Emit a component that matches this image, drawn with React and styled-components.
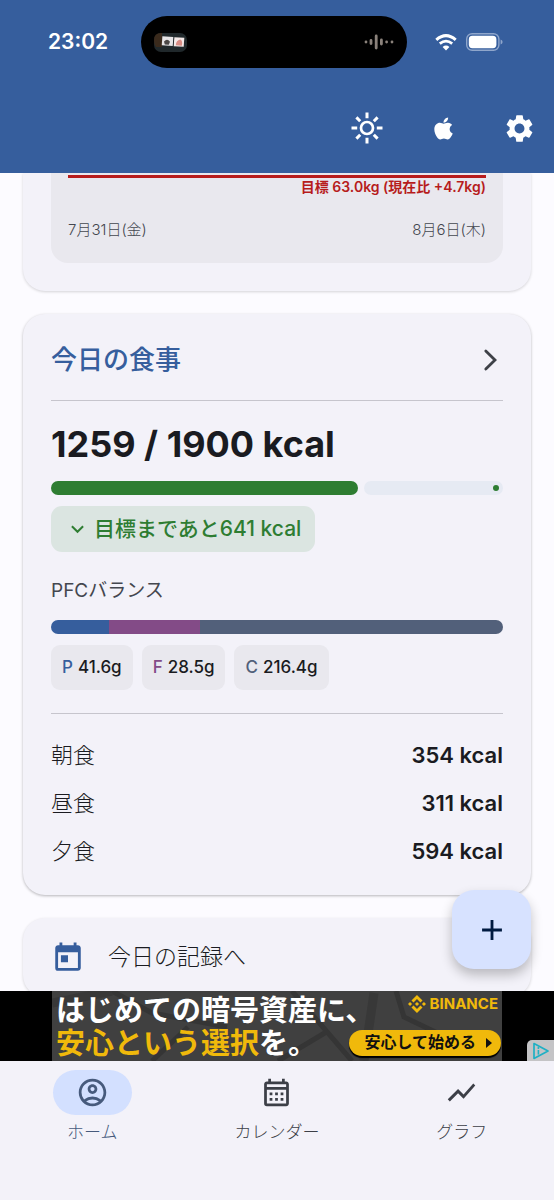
import styled, { createGlobalStyle } from "styled-components";
import { FaApple } from "react-icons/fa";
import {
  MdAdd,
  MdOutlineAccountCircle,
  MdOutlineCalendarMonth,
  MdSettings,
  MdShowChart,
  MdToday,
} from "react-icons/md";
import { SiBinance } from "react-icons/si";

const GlobalStyle = createGlobalStyle`
  :root {
    --color-primary: #365e9d;
    --color-surface: #f3f2f9;
    --color-panel: #e9e8ee;
    --color-background: #fcfbff;
    --color-text: #1a1b21;
    --color-muted: #44474f;
    --color-green: #2e7d32;
    --color-purple: #834b87;
    --color-slate: #52607a;
    --color-red: #b71c1c;
    --color-divider: #c6c5cd;
    --color-yellow: #f0b90b;
  }

  * {
    box-sizing: border-box;
  }

  body {
    margin: 0;
    background-color: var(--color-surface);
    color: var(--color-text);
    font-family: Inter, "Noto Sans CJK JP", sans-serif;
    line-height: 1.2;
  }

  button {
    font: inherit;
    border: none;
    padding: 0;
    background: none;
    cursor: pointer;
  }

  a {
    color: inherit;
    text-decoration: none;
  }

  h1, h2, p, dl, dd {
    margin: 0;
  }

  svg {
    display: block;
    flex-shrink: 0;
  }
`;

const Screen = styled.div`
  display: flex;
  flex-direction: column;
  height: 100vh;
`;

const Header = styled.header`
  background-color: var(--color-primary);
  color: #fff;
  padding: 16px 0 27px;
`;

const StatusBar = styled.div`
  display: grid;
  grid-template-columns: 1fr 266px 1fr;
  align-items: center;
  padding-right: 6px;
`;

const Clock = styled.time`
  padding-left: 48px;
  font-size: 21px;
  font-weight: 600;
`;

const Island = styled.div`
  display: flex;
  align-items: center;
  justify-content: space-between;
  height: 52px;
  padding: 0 13px;
  border-radius: 26px;
  background-color: #000;
`;

const StatusIcons = styled.div`
  display: flex;
  align-items: center;
  gap: 9px;
  padding-left: 28px;
`;

const Toolbar = styled.div`
  display: flex;
  justify-content: flex-end;
  gap: 40px;
  padding: 42px 17px 0;
`;

const IconButton = styled.button`
  display: grid;
  place-items: center;
  width: 36px;
  height: 36px;
  color: #fff;
`;

const Body = styled.div`
  position: relative;
  flex: 1;
  min-height: 0;
  background-color: var(--color-background);
`;

const Feed = styled.main`
  display: flex;
  flex-direction: column;
  gap: 23px;
  height: 100%;
  padding: 0 23px;
  overflow: hidden;
`;

const Card = styled.section`
  flex-shrink: 0;
  padding: 22px 28px 20px;
  border-radius: 22px;
  background-color: var(--color-surface);
  box-shadow: 0 1px 3px rgba(0, 0, 0, 0.28);
`;

const WeightCard = styled(Card)`
  padding: 0 28px 28px;
  border-radius: 0 0 22px 22px;
  box-shadow: 0 1px 3px rgba(0, 0, 0, 0.16);
`;

const ChartPanel = styled.div`
  padding: 2px 17px 22px;
  border-radius: 0 0 17px 17px;
  background-color: var(--color-panel);
`;

const GoalLine = styled.p`
  border-top: 3px solid var(--color-red);
  color: var(--color-red);
  font-size: 14px;
  font-weight: 600;
  line-height: 18px;
  text-align: right;
`;

const DateRange = styled.div`
  display: flex;
  justify-content: space-between;
  margin-top: 23px;
  color: var(--color-muted);
  font-size: 15px;
  font-weight: 300;
  line-height: 22px;
`;

const CardTitle = styled.h2`
  margin-bottom: 17px;
  font-size: 26px;
  font-weight: 500;
  line-height: 47px;
  color: var(--color-primary);

  a {
    display: flex;
    align-items: center;
    justify-content: space-between;
  }
`;

const Divider = styled.hr`
  height: 1px;
  margin: 0;
  border: none;
  background-color: var(--color-divider);
`;

const Total = styled.p`
  margin: 18px 0 12px;
  font-size: 36px;
  font-weight: 700;
  line-height: 50px;
`;

const Progress = styled.div`
  display: flex;
  gap: 6px;
  height: 14px;
`;

const ProgressValue = styled.div`
  border-radius: 7px;
  background-color: var(--color-green);
`;

const ProgressRest = styled.div`
  display: flex;
  flex: 1;
  align-items: center;
  justify-content: flex-end;
  padding-right: 4px;
  border-radius: 7px;
  background-color: #e6eaf3;

  &::after {
    content: "";
    width: 6px;
    height: 6px;
    border-radius: 50%;
    background-color: var(--color-green);
  }
`;

const Remaining = styled.p`
  display: flex;
  align-items: center;
  gap: 10px;
  width: fit-content;
  height: 46px;
  margin-top: 11px;
  padding: 0 14px 0 20px;
  border-radius: 11px;
  background-color: #dbe5e1;
  color: var(--color-green);
  font-size: 21px;
  font-weight: 500;
`;

const SubTitle = styled.p`
  margin: 26px 0 16px;
  color: var(--color-muted);
  font-size: 19px;
  font-weight: 400;
  line-height: 26px;
`;

const Balance = styled.div`
  display: flex;
  height: 14px;
  border-radius: 7px;
  overflow: hidden;
`;

const BalancePart = styled.div`
  background-color: ${(props) => props.$color};
`;

const Chips = styled.div`
  display: flex;
  gap: 9px;
  margin: 11px 0 23px;
`;

const Chip = styled.span`
  display: flex;
  align-items: center;
  gap: 5px;
  height: 45px;
  padding: 0 11px;
  border-radius: 9px;
  background-color: var(--color-panel);
  font-size: 17px;
  font-weight: 500;

  b {
    color: ${(props) => props.$color};
    font-weight: 500;
  }
`;

const Meals = styled.dl`
  margin-top: 17px;
`;

const Meal = styled.div`
  display: flex;
  align-items: center;
  justify-content: space-between;
  height: 48px;
  font-size: 22px;

  dt {
    font-weight: 300;
  }

  dd {
    font-weight: 600;
  }
`;

const RecordLink = styled.a`
  display: flex;
  flex-shrink: 0;
  align-items: center;
  gap: 23px;
  height: 79px;
  padding: 0 28px;
  border-radius: 22px;
  background-color: var(--color-surface);
  box-shadow: 0 1px 3px rgba(0, 0, 0, 0.16);
  font-size: 23px;
  font-weight: 300;

  svg {
    color: var(--color-primary);
  }
`;

const AddButton = styled.button`
  position: absolute;
  right: 23px;
  bottom: 22px;
  display: grid;
  place-items: center;
  width: 79px;
  height: 79px;
  border-radius: 22px;
  background-color: #d7e2ff;
  color: #001a40;
  box-shadow: 0 6px 12px rgba(0, 0, 0, 0.24);
`;

const AdStrip = styled.aside`
  position: relative;
  display: flex;
  justify-content: center;
  height: 70px;
  background-color: #000;
`;

const AdBanner = styled.a`
  position: relative;
  width: 450px;
  padding: 3px 4px 0;
  background-color: #404040;
  color: #fff;
`;

const AdPattern = styled.svg`
  position: absolute;
  inset: 0;
`;

const AdCopy = styled.p`
  position: relative;
  font-size: 29px;
  font-weight: 700;
  line-height: 33px;
  white-space: nowrap;

  em {
    color: var(--color-yellow);
    font-style: normal;
  }
`;

const AdSide = styled.div`
  position: absolute;
  top: 4px;
  right: 1px;
  display: flex;
  flex-direction: column;
  align-items: flex-end;
  gap: 17px;
`;

const AdBrand = styled.span`
  display: flex;
  align-items: center;
  gap: 4px;
  padding-right: 3px;
  color: var(--color-yellow);
  font-size: 15px;
  font-weight: 700;
  line-height: 18px;
`;

const AdAction = styled.span`
  display: flex;
  align-items: center;
  gap: 10px;
  height: 26px;
  padding: 0 9px 0 15px;
  border-radius: 13px;
  background-color: var(--color-yellow);
  box-shadow: 0 2px 1px #000;
  color: #111;
  font-size: 16px;
  font-weight: 700;
`;

const AdChoices = styled.a`
  position: absolute;
  right: 0;
  bottom: 0;
  display: grid;
  place-items: center;
  width: 27px;
  height: 21px;
  border-top-left-radius: 5px;
  background-color: #c4c4c6;
`;

const Nav = styled.nav`
  display: grid;
  grid-template-columns: repeat(3, 1fr);
  padding: 9px 0 55px;
  background-color: var(--color-surface);
`;

const NavItem = styled.a`
  display: flex;
  flex-direction: column;
  align-items: center;
  gap: 5px;
  color: ${(props) => (props.$active ? "#465a7c" : "#3c3f47")};
  font-size: 17px;
  font-weight: 300;
  line-height: 25px;
`;

const NavIcon = styled.span`
  display: grid;
  place-items: center;
  width: 79px;
  height: 45px;
  border-radius: 23px;
  background-color: ${(props) => (props.$active ? "#d3e0ff" : "transparent")};
`;

const meals = [
  { name: "朝食", kcal: 354 },
  { name: "昼食", kcal: 311 },
  { name: "夕食", kcal: 594 },
];

const nutrients = [
  { label: "P", grams: "41.6g", share: 12.9, color: "var(--color-primary)" },
  { label: "F", grams: "28.5g", share: 20, color: "var(--color-purple)" },
  { label: "C", grams: "216.4g", share: 67.1, color: "var(--color-slate)" },
];

const tabs = [
  { label: "ホーム", icon: MdOutlineAccountCircle, active: true },
  { label: "カレンダー", icon: MdOutlineCalendarMonth },
  { label: "グラフ", icon: MdShowChart },
];

const goal = 1900;
const eaten = meals.reduce((sum, meal) => sum + meal.kcal, 0);

function Thumbnail() {
  return (
    <svg width="33" height="19" viewBox="0 0 33 19">
      <rect width="33" height="19" rx="7" fill="#20282b" />
      <path d="M7 0h1v14H2Q0 11 0 7 0 0 7 0z" fill="#3a2a1c" />
      <g transform="rotate(4 18 9)">
        <rect x="8" y="4" width="11" height="9" fill="#e6e4e6" />
        <rect x="20" y="4" width="10" height="9" fill="#f4e9e8" />
        <path d="M10 9q3-4 6 0l-1 3h-4z" fill="#4b4746" />
        <path d="M22 12q0-5 4-6 3 1 2 6z" fill="#d98c84" />
      </g>
    </svg>
  );
}

function SoundWave() {
  return (
    <svg width="30" height="16" viewBox="0 0 30 16" strokeLinecap="round">
      <g stroke="#8b827b" strokeWidth="2.8">
        <path d="M2 8v.1M7 6.4v3.2M12.2 2v12M17.4 6v4" />
        <path d="M22.6 8v.1M28 8v.1" />
      </g>
    </svg>
  );
}

function Wifi() {
  return (
    <svg width="22" height="17" viewBox="0 0 22 17" fill="none" stroke="#fff">
      <path d="M1.3 5.8Q11-2.6 20.7 5.8" strokeWidth="3" />
      <path d="M4.8 9.6q6.2-5 12.4 0" strokeWidth="2.8" />
      <path d="M11 16.4 7.6 13q3.4-2.9 6.8 0z" fill="#fff" stroke="none" />
    </svg>
  );
}

function Battery() {
  return (
    <svg width="37" height="18" viewBox="0 0 37 18">
      <rect
        x=".7"
        y=".7"
        width="32.2"
        height="16.6"
        rx="5.4"
        fill="none"
        stroke="#8fa6cb"
        strokeWidth="1.4"
      />
      <rect x="2.8" y="2.8" width="27.6" height="12.4" rx="3.6" fill="#fff" />
      <path d="M34.6 6.4q2 .8 2 2.6t-2 2.6z" fill="#8fa6cb" />
    </svg>
  );
}

function Sun() {
  return (
    <svg width="32" height="32" viewBox="0 0 32 32" fill="none" stroke="#fff">
      <circle cx="16" cy="16" r="6" strokeWidth="2.7" />
      <path
        strokeWidth="3"
        d="M16 .5v5.7M16 25.8v5.7M.5 16h5.7M25.8 16h5.7M5.4 5.4l3.8 3.8M22.8 22.8l3.8 3.8M5.4 26.6l3.8-3.8M22.8 9.2l3.8-3.8"
      />
    </svg>
  );
}

function Chevron() {
  return (
    <svg width="26" height="26" viewBox="0 0 26 26" fill="none">
      <path
        d="M8.8 4 18 13l-9.2 9"
        stroke="#3e4148"
        strokeWidth="2.8"
        strokeLinecap="round"
      />
    </svg>
  );
}

function ChevronDown() {
  return (
    <svg width="13" height="9" viewBox="0 0 13 9" fill="none">
      <path d="M.9 1.2l5.6 5.6 5.6-5.6" stroke="currentColor" strokeWidth="2" />
    </svg>
  );
}

export default function App() {
  return (
    <>
      <GlobalStyle />
      <Screen>
        <Header>
          <StatusBar>
            <Clock>23:02</Clock>
            <Island>
              <Thumbnail />
              <SoundWave />
            </Island>
            <StatusIcons>
              <Wifi />
              <Battery />
            </StatusIcons>
          </StatusBar>
          <Toolbar>
            <IconButton aria-label="テーマ">
              <Sun />
            </IconButton>
            <IconButton aria-label="Apple">
              <FaApple size={25} />
            </IconButton>
            <IconButton aria-label="設定">
              <MdSettings size={33} />
            </IconButton>
          </Toolbar>
        </Header>

        <Body>
          <Feed>
            <WeightCard>
              <ChartPanel>
                <GoalLine>目標 63.0kg (現在比 +4.7kg)</GoalLine>
                <DateRange>
                  <span>7月31日(金)</span>
                  <span>8月6日(木)</span>
                </DateRange>
              </ChartPanel>
            </WeightCard>

            <Card>
              <CardTitle>
                <a href="#meals">
                  今日の食事
                  <Chevron />
                </a>
              </CardTitle>
              <Divider />
              <Total>
                {eaten} / {goal} kcal
              </Total>
              <Progress>
                <ProgressValue
                  style={{ width: `calc(${(eaten / goal) * 100}% + 7px)` }}
                />
                <ProgressRest />
              </Progress>
              <Remaining>
                <ChevronDown />
                目標まであと{goal - eaten} kcal
              </Remaining>

              <SubTitle>PFCバランス</SubTitle>
              <Balance>
                {nutrients.map(({ label, share, color }) => (
                  <BalancePart
                    key={label}
                    $color={color}
                    style={{ width: `${share}%` }}
                  />
                ))}
              </Balance>
              <Chips>
                {nutrients.map(({ label, grams, color }) => (
                  <Chip key={label} $color={color}>
                    <b>{label}</b>
                    {grams}
                  </Chip>
                ))}
              </Chips>

              <Divider />
              <Meals>
                {meals.map(({ name, kcal }) => (
                  <Meal key={name}>
                    <dt>{name}</dt>
                    <dd>{kcal} kcal</dd>
                  </Meal>
                ))}
              </Meals>
            </Card>

            <RecordLink href="#today">
              <MdToday size={34} />
              今日の記録へ
            </RecordLink>
          </Feed>
          <AddButton aria-label="追加">
            <MdAdd size={34} />
          </AddButton>
        </Body>

        <AdStrip>
          <AdBanner href="#ad">
            <AdPattern width="450" height="70" viewBox="0 0 450 70" fill="none">
              <path
                d="M60 0l40 22 75 14M100 70l36-34M240 0l60 70M226 70l50-30M344 0l8 26 46 22"
                stroke="#353535"
                strokeWidth="5"
              />
              <path d="M0 12l60-12M322 2l-10 68" stroke="#383838" strokeWidth="9" />
            </AdPattern>
            <AdCopy>
              はじめての暗号資産に、
              <br />
              <em>安心という選択</em>を。
            </AdCopy>
            <AdSide>
              <AdBrand>
                <SiBinance size={18} />
                BINANCE
              </AdBrand>
              <AdAction>
                安心して始める
                <svg width="6" height="10" viewBox="0 0 6 10">
                  <path d="M0 0l6 5-6 5z" fill="#111" />
                </svg>
              </AdAction>
            </AdSide>
          </AdBanner>
          <AdChoices href="#adchoices" aria-label="AdChoices">
            <svg width="18" height="18" viewBox="0 0 18 18" fill="none">
              <path
                d="M2 1.6 16 9 2 16.4z"
                stroke="#1fb0c4"
                strokeWidth="1.7"
                strokeLinejoin="round"
              />
              <path d="M6.4 8v4.6" stroke="#1fb0c4" strokeWidth="1.6" />
              <circle cx="6.4" cy="5.9" r="1" fill="#1fb0c4" />
            </svg>
          </AdChoices>
        </AdStrip>

        <Nav>
          {tabs.map(({ label, icon: Icon, active }) => (
            <NavItem key={label} href="#" $active={active}>
              <NavIcon $active={active}>
                <Icon size={33} />
              </NavIcon>
              {label}
            </NavItem>
          ))}
        </Nav>
      </Screen>
    </>
  );
}
